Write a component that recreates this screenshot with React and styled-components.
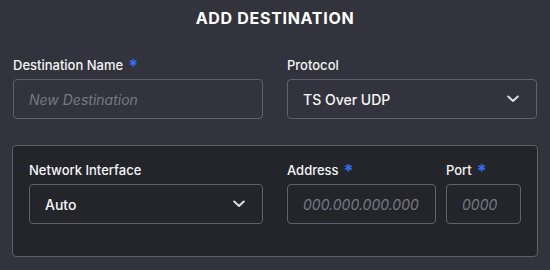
import React from "react";
import styled, { createGlobalStyle } from "styled-components";

const Global = createGlobalStyle`
  html, body { margin: 0; padding: 0; background: #32333c; }
  body { font-family: Inter, "Noto Sans", sans-serif; color: #f2f2f4; }
  * { box-sizing: border-box; }
`;

const Page = styled.div`
  width: 550px;
  height: 270px;
  padding: 8px 13px 0 13px;
  display: flex;
  flex-direction: column;
`;

const Title = styled.h1`
  margin: 0;
  font-size: 16px;
  line-height: 20px;
  font-weight: 700;
  text-align: center;
  letter-spacing: 0.7px;
  color: #ffffff;
`;

const Row = styled.div`
  display: grid;
  grid-template-columns: ${(p) => p.$cols};
  column-gap: ${(p) => p.$gap || "24px"};
`;

const TopRow = styled(Row)`
  margin-top: 29px;
`;

const Panel = styled.div`
  margin: 26px -1px 0 -1px;
  padding: 16px 16px 32px 16px;
  border: 1px solid #5d5f6b;
  border-radius: 4px;
  background: #24252b;
`;

const Field = styled.div`
  display: flex;
  flex-direction: column;
  gap: 6px;
  min-width: 0;
`;

const Label = styled.label`
  font-size: 13px;
  line-height: 16px;
  font-weight: 500;
  color: #f4f4f6;
  white-space: nowrap;
`;

const Req = styled.span`
  color: #2f6ff0;
  margin-left: 5px;
  font-size: 18px;
  line-height: 10px;
  font-weight: 700;
  vertical-align: -2px;
`;

const Input = styled.input`
  height: 40px;
  width: 100%;
  padding: 0 15px;
  border: 1px solid #5f616d;
  border-radius: 4px;
  background: transparent;
  color: #f2f2f4;
  font-family: inherit;
  font-size: 14px;
  outline: none;
  &::placeholder {
    color: #787983;
    font-style: italic;
  }
`;

const Select = styled.div`
  height: 40px;
  padding: 0 17px 0 15px;
  border: 1px solid #5f616d;
  border-radius: 4px;
  display: flex;
  align-items: center;
  justify-content: space-between;
  font-size: 14px;
  font-weight: 500;
  color: #f6f6f8;
`;

const Chevron = () => (
  <svg width="12" height="8" viewBox="0 0 12 8" fill="none">
    <polyline
      points="1.2,1.5 6,6 10.8,1.5"
      stroke="#dcdce0"
      strokeWidth="2"
      strokeLinecap="round"
      strokeLinejoin="round"
    />
  </svg>
);

export default function App() {
  return (
    <>
      <Global />
      <Page>
        <Title>ADD DESTINATION</Title>
        <TopRow $cols="1fr 1fr">
          <Field>
            <Label>
              Destination Name<Req>*</Req>
            </Label>
            <Input placeholder="New Destination" />
          </Field>
          <Field>
            <Label>Protocol</Label>
            <Select>
              <span>TS Over UDP</span>
              <Chevron />
            </Select>
          </Field>
        </TopRow>
        <Panel>
          <Row $cols="1fr 1fr">
            <Field>
              <Label>Network Interface</Label>
              <Select>
                <span>Auto</span>
                <Chevron />
              </Select>
            </Field>
            <Row $cols="1fr 75px" $gap="10px">
              <Field>
                <Label>
                  Address<Req>*</Req>
                </Label>
                <Input placeholder="000.000.000.000" />
              </Field>
              <Field>
                <Label>
                  Port<Req>*</Req>
                </Label>
                <Input placeholder="0000" />
              </Field>
            </Row>
          </Row>
        </Panel>
      </Page>
    </>
  );
}
